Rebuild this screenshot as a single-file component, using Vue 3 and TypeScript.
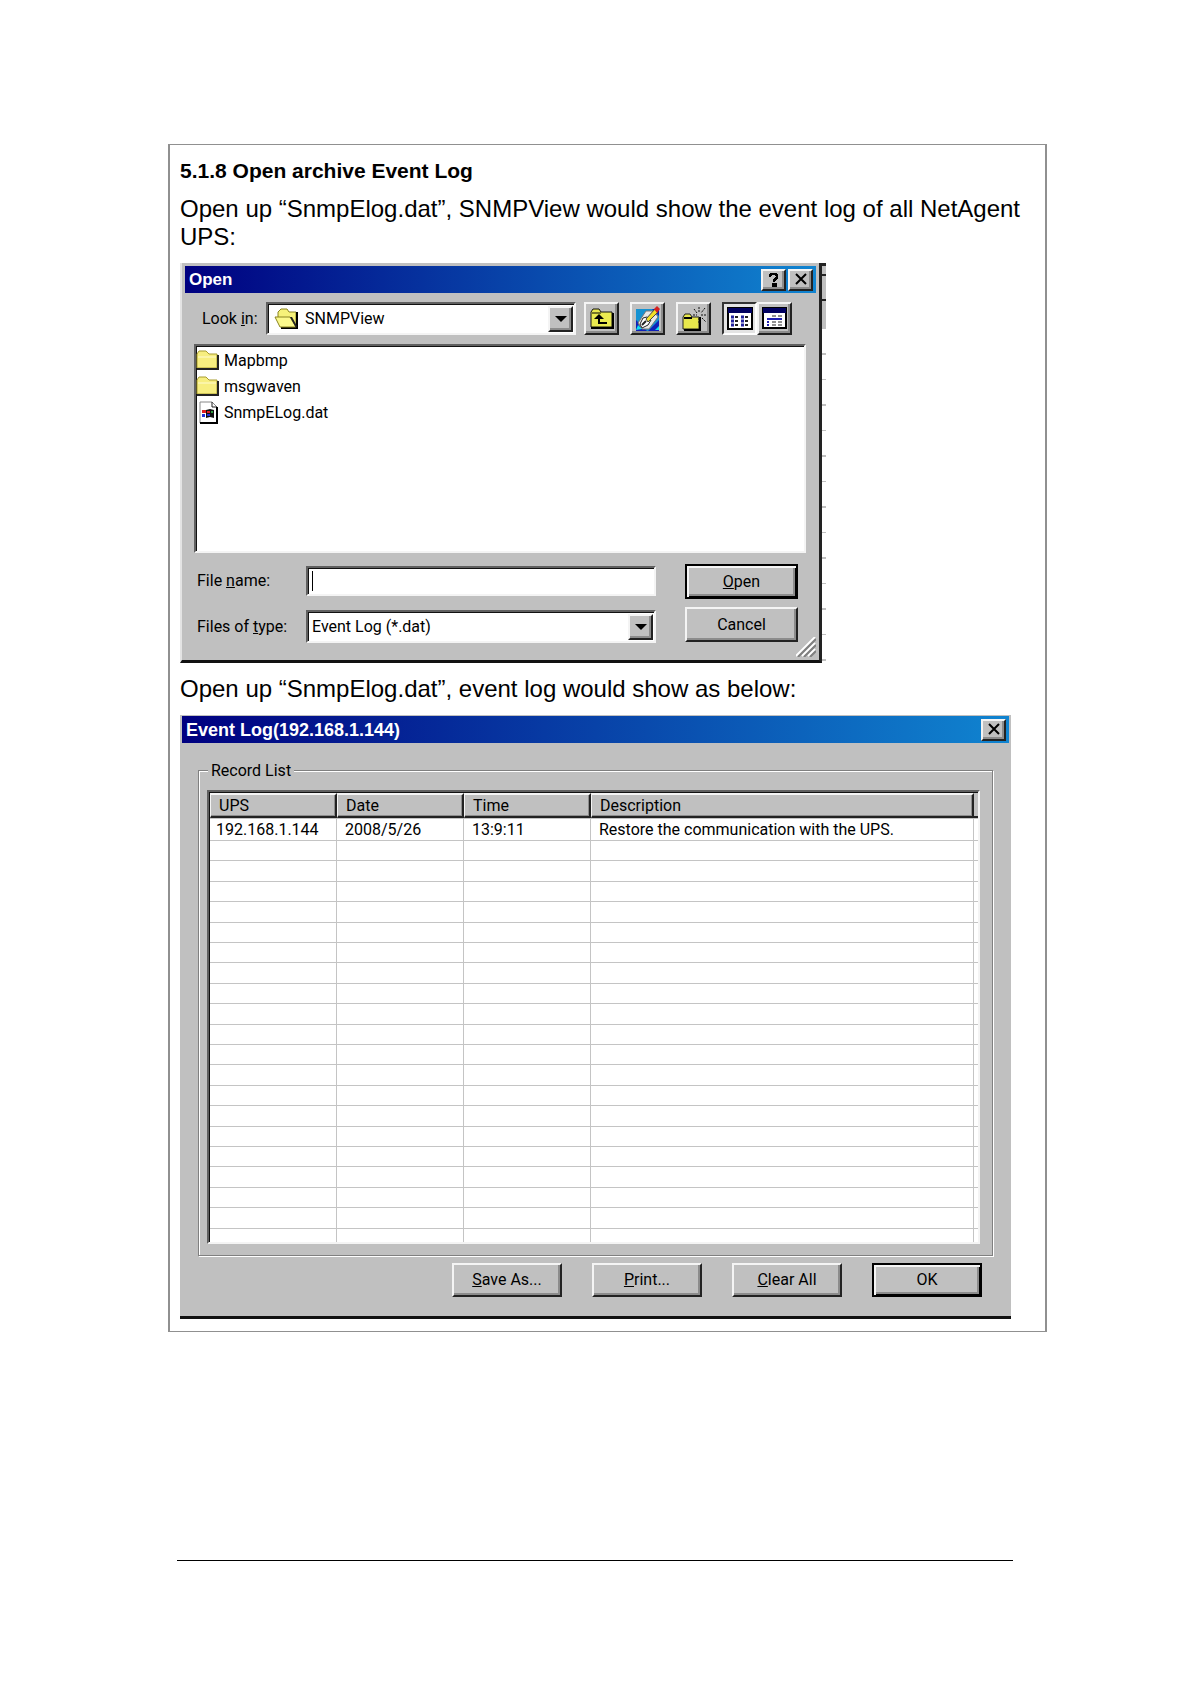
<script setup lang="ts">
import { ref } from 'vue'

interface FileEntry {
  name: string
  kind: 'folder' | 'data'
}

interface LogRecord {
  ups: string
  date: string
  time: string
  description: string
}

const files: FileEntry[] = [
  { name: 'Mapbmp', kind: 'folder' },
  { name: 'msgwaven', kind: 'folder' },
  { name: 'SnmpELog.dat', kind: 'data' },
]

const records: LogRecord[] = [
  {
    ups: '192.168.1.144',
    date: '2008/5/26',
    time: '13:9:11',
    description: 'Restore the communication with the UPS.',
  },
]

const emptyRows = 20
const fileName = ref('')
</script>

<template>
  <main class="page">
    <section class="frame">
      <h1 class="heading">5.1.8 Open archive Event Log</h1>
      <p class="para">
        Open up “SnmpElog.dat”, SNMPView would show the event log of all NetAgent UPS:
      </p>

      <form class="dialog open-dialog" @submit.prevent>
        <header class="titlebar">
          <h2 class="title">Open</h2>
          <button type="button" class="raised caption-btn" aria-label="Help">
            <svg width="14" height="15" viewBox="0 0 14 15">
              <path d="M3 5V3h1V2h5v1h1v3H9v1H8v1H7v2M6 12h3v2H6z" fill="none" stroke="#000" stroke-width="2" />
            </svg>
          </button>
          <button type="button" class="raised caption-btn" aria-label="Close">
            <svg width="14" height="13" viewBox="0 0 14 13">
              <path d="M2 1l10 10M12 1L2 11" stroke="#000" stroke-width="2" />
            </svg>
          </button>
        </header>

        <div class="toolbar">
          <label for="look-in">Look <u>i</u>n:</label>
          <div class="sunken combo look-combo">
            <svg class="combo-icon" width="26" height="22" viewBox="0 0 26 22">
              <path d="M4 10V4l3-3h6l2 3h7v15" fill="#f6f27a" stroke="#8a8420" />
              <path d="M23 4v16H7" fill="none" stroke="#000" stroke-width="2" />
              <path d="M1 9h15l6 10H6z" fill="#fbf98c" stroke="#8a8420" />
              <path d="M16 9h2l5 9-1 2z" fill="#222" />
            </svg>
            <select id="look-in" class="select">
              <option>SNMPView</option>
            </select>
            <span class="raised arrow"></span>
          </div>
          <div class="tools">
            <button type="button" class="raised tool" aria-label="Up one level">
              <svg width="26" height="24" viewBox="0 0 26 24">
                <path d="M2 20V5l2-3h6l2 3h11v15z" fill="#eaea50" stroke="#111" stroke-width="1" />
                <path d="M3 6h9" stroke="#000" />
                <path d="M2 21h22V6" fill="none" stroke="#000" stroke-width="2" />
                <path d="M10 10v6h8" fill="none" stroke="#000" stroke-width="2" />
                <path d="M5 12l5-5 5 5z" fill="#000" />
              </svg>
            </button>
            <button type="button" class="raised tool" aria-label="View desktop">
              <svg width="26" height="26" viewBox="0 0 26 26">
                <path d="M1 3h23v22H1z" fill="#1592d2" />
                <path d="M1 14l11 11H1zM24 14v11H13zM17 3h7v7z" fill="#1020b8" />
                <path d="M3 17l8-12h8l4 6-9 12H7z" fill="#e8e8e8" stroke="#777" />
                <path d="M1 24l2-5 4 4zM24 24h-4l4-4z" fill="#13e0ee" />
                <path d="M5 18l3-6 4-1 4 3-3 5-6 3z" fill="#fff" stroke="#222" />
                <path d="M11 13l9-10 3 3-10 10z" fill="#f1df28" stroke="#444" />
                <path d="M19 3l3-3 3 3-3 4z" fill="#d32020" />
                <path d="M7 19l4-4" stroke="#222" stroke-width="2" />
              </svg>
            </button>
            <button type="button" class="raised tool" aria-label="Create new folder">
              <svg width="26" height="26" viewBox="0 0 26 26">
                <path d="M2 23V11l2-3h5l2 3h7v12z" fill="#e8e84c" stroke="#222" />
                <path d="M3 24h16V11M3 12h8" fill="none" stroke="#000" stroke-width="2" />
                <path d="M18 1v5M13 3l3 4M24 2l-4 5M12 9h4M20 9h6M21 12l4 4M18 12v5" stroke="#111" stroke-dasharray="2 1" />
              </svg>
            </button>
            <div class="view-pair">
              <button type="button" class="tool pressed" aria-label="List">
                <svg width="26" height="24" viewBox="0 0 26 24">
                  <path d="M1 1h24v21H1z" fill="#fff" stroke="#000" stroke-width="2" />
                  <path d="M1 1h24v5H1z" fill="#000060" />
                  <path d="M4 10h3M4 14h3M4 18h3M14 10h3M14 14h3M14 18h3" stroke="#2020a0" stroke-width="3" />
                  <path d="M8 10h3M8 14h3M8 18h3M18 10h3M18 14h3M18 18h3" stroke="#222" stroke-width="2" />
                </svg>
              </button>
              <button type="button" class="raised tool" aria-label="Details">
                <svg width="26" height="24" viewBox="0 0 26 24">
                  <path d="M1 1h23v20H1z" fill="#fff" stroke="#000" stroke-width="2" />
                  <path d="M1 1h23v5H1z" fill="#000060" />
                  <path d="M10 9h4M16 9h4M10 15h4M16 15h4M10 18h4M16 18h4" stroke="#222" stroke-width="1" />
                  <path d="M5 12h15M5 15h2M5 18h2" stroke="#2020b0" stroke-width="2" />
                </svg>
              </button>
            </div>
          </div>
        </div>

        <ul class="sunken file-list">
          <li v-for="file in files" :key="file.name">
            <svg v-if="file.kind === 'folder'" width="24" height="22" viewBox="0 0 24 22">
              <path d="M1 18V4l2-3h7l3 3h8v14z" fill="#f7ee80" stroke="#a89c30" />
              <path d="M2 7h18" stroke="#fffbd0" />
              <path d="M1 19h21V5" fill="none" stroke="#222" stroke-width="2" />
            </svg>
            <svg v-else width="24" height="24" viewBox="0 0 24 24">
              <path d="M4 1h12l5 5v16H4z" fill="#fff" stroke="#888" />
              <path d="M16 1v5h5" fill="none" stroke="#222" />
              <path d="M21 6v16H4" fill="none" stroke="#000" stroke-width="2" />
              <path d="M10 9l4-1 4 1v8l-4-1-4 1z" fill="#111" />
              <path d="M6 9h4v3H6z" fill="#e02020" />
              <path d="M11 10h3v2h-3z" fill="#e02020" />
              <path d="M6 13h3v3H6zM11 13h3v2h-3z" fill="#2030d8" />
              <path d="M15 10h2v2h-2z" fill="#30a040" />
            </svg>
            <span>{{ file.name }}</span>
          </li>
        </ul>

        <div class="bottom">
          <div class="fields">
            <label for="file-name">File <u>n</u>ame:</label>
            <div class="sunken combo name-box">
              <span class="caret"></span>
              <input id="file-name" v-model="fileName" class="input" type="text" />
            </div>
            <label for="file-type">Files of <u>t</u>ype:</label>
            <div class="sunken combo">
              <select id="file-type" class="select">
                <option>Event Log (*.dat)</option>
              </select>
              <span class="raised arrow"></span>
            </div>
          </div>
          <div class="choices">
            <button type="submit" class="raised push default">
              <span><u>O</u>pen</span>
            </button>
            <button type="button" class="raised push">Cancel</button>
          </div>
        </div>
        <svg class="grip" width="20" height="20" viewBox="0 0 20 20">
          <path d="M0 19L19 0M6 19L19 6M12 19l7-7" stroke="#fff" stroke-width="2" />
          <path d="M2 20L20 2M8 20L20 8M14 20l6-6" stroke="#808080" stroke-width="2" />
        </svg>
      </form>

      <p class="para">Open up “SnmpElog.dat”, event log would show as below:</p>

      <section class="dialog log-dialog">
        <header class="titlebar">
          <h2 class="title">Event Log(192.168.1.144)</h2>
          <button type="button" class="raised caption-btn" aria-label="Close">
            <svg width="14" height="13" viewBox="0 0 14 13">
              <path d="M2 1l10 10M12 1L2 11" stroke="#000" stroke-width="2" />
            </svg>
          </button>
        </header>

        <fieldset class="group">
          <legend>Record List</legend>
          <div class="group-body">
            <div class="sunken grid-box">
              <table class="grid">
                <colgroup>
                  <col class="col-key" />
                  <col class="col-key" />
                  <col class="col-key" />
                  <col />
                  <col class="col-end" />
                </colgroup>
                <thead>
                  <tr>
                    <th scope="col">UPS</th>
                    <th scope="col">Date</th>
                    <th scope="col">Time</th>
                    <th scope="col">Description</th>
                    <td class="end"></td>
                  </tr>
                </thead>
                <tbody>
                  <tr v-for="record in records" :key="record.ups + record.time">
                    <td>{{ record.ups }}</td>
                    <td>{{ record.date }}</td>
                    <td>{{ record.time }}</td>
                    <td>{{ record.description }}</td>
                    <td></td>
                  </tr>
                  <tr v-for="row in emptyRows" :key="row">
                    <td v-for="cell in 5" :key="cell"></td>
                  </tr>
                </tbody>
              </table>
            </div>
          </div>
        </fieldset>

        <footer class="actions">
          <button type="button" class="raised push"><span><u>S</u>ave As...</span></button>
          <button type="button" class="raised push"><span><u>P</u>rint...</span></button>
          <button type="button" class="raised push"><span><u>C</u>lear All</span></button>
          <button type="button" class="raised push default">OK</button>
        </footer>
      </section>
    </section>
    <hr class="rule" />
  </main>
</template>

<style>
body {
  margin: 0;
  background: #fff;
}
</style>

<style scoped>
* {
  box-sizing: border-box;
}

.page {
  padding: 144px 143px 124px 168px;
  font-family: 'Liberation Sans', Arial, sans-serif;
  color: #000;
}

.frame {
  display: flex;
  flex-direction: column;
  gap: 12px;
  padding: 12px 24px 12px 10px;
  border: 1px solid #909090;
  border-width: 1px 2px;
}

.heading {
  margin: 0;
  font-size: 21px;
  line-height: 28px;
  font-weight: 700;
}

.para {
  margin: 0;
  font-size: 24px;
  line-height: 28px;
}

.heading + .para {
  margin-top: -2px;
}

.dialog {
  background: #c0c0c0;
  font-family: Roboto, 'Liberation Sans', sans-serif;
  font-size: 16px;
  line-height: 20px;
}

.open-dialog {
  position: relative;
  width: 642px;
  max-width: 100%;
  padding: 3px 3px 17px;
  border: solid #e4e4e4;
  border-width: 0 3px 3px 2px;
  border-right-color: #222;
  border-bottom-color: #111;
}

/* Strip of the window behind, visible past the dialog's right edge. */
.open-dialog::after {
  content: '';
  position: absolute;
  top: 0;
  right: -7px;
  width: 4px;
  height: 399px;
  background:
    linear-gradient(#222, #222) 0 0 / 4px 3px no-repeat,
    linear-gradient(#222, #222) 0 11px / 4px 2px no-repeat,
    linear-gradient(#222, #222) 0 36px / 4px 2px no-repeat,
    linear-gradient(#c0c0c0, #c0c0c0) 0 0 / 4px 66px no-repeat,
    repeating-linear-gradient(#fff 0 24px, #c0c0c0 24px 26px, #fff 26px 50px, #c0c0c0 50px 51px) 0 66px / 4px 333px no-repeat;
}

.titlebar {
  display: flex;
  align-items: center;
  gap: 2px;
  height: 27px;
  padding: 0 3px 0 4px;
  background: linear-gradient(90deg, #000080, #1084d0);
}

.title {
  flex: 1;
  margin: 0;
  color: #fff;
  font-family: 'Liberation Sans', Arial, sans-serif;
  font-size: 17px;
  line-height: 20px;
  font-weight: 700;
}

button {
  display: flex;
  align-items: center;
  justify-content: center;
  padding: 0;
  color: #000;
  font: inherit;
}

.raised {
  border: 2px solid #f4f4f4;
  border-right-color: #222;
  border-bottom-color: #222;
  background: #c0c0c0;
  box-shadow: inset -2px -2px 0 #8c8c8c;
}

.sunken {
  border: 2px solid;
  border-color: #606060 #f4f4f4 #f4f4f4 #606060;
  background: #fff;
  box-shadow: inset 1px 1px 0 #111;
}

.caption-btn {
  width: 25px;
  height: 22px;
}

.toolbar {
  display: flex;
  align-items: center;
  height: 33px;
  margin: 9px 24px 9px 17px;
}

.toolbar label {
  width: 64px;
}

.combo {
  display: flex;
  align-items: center;
  min-width: 0;
  height: 33px;
  padding: 2px 1px 2px 2px;
}

.look-combo {
  flex: 1;
}

.combo-icon {
  flex: none;
  margin-left: 4px;
}

.select,
.input {
  flex: 1;
  min-width: 0;
  height: 24px;
  padding: 0 0 0 2px;
  border: 0;
  outline: 0;
  background: transparent;
  color: #000;
  font: inherit;
  appearance: none;
}

.look-combo .select {
  padding-left: 5px;
}

.arrow {
  display: flex;
  align-items: center;
  justify-content: center;
  width: 25px;
  height: 26px;
}

.arrow::before {
  content: '';
  border: 6px solid transparent;
  border-top-color: #000;
  border-bottom-width: 0;
}

.tools {
  display: flex;
  gap: 11px;
  margin-left: 8px;
}

.view-pair {
  display: flex;
}

.tool {
  width: 35px;
  height: 33px;
}

.pressed {
  border: 2px solid;
  border-color: #333 #fff #fff #333;
  background: #e4e4e4;
}

.file-list {
  height: 209px;
  margin: 0 10px 0 9px;
  padding: 2px 0;
  list-style: none;
}

.file-list li {
  display: flex;
  align-items: center;
  gap: 4px;
  height: 26px;
}

.bottom {
  display: flex;
  justify-content: space-between;
  margin: 11px 18px 0 12px;
}

.fields {
  display: grid;
  grid-template-columns: 109px 350px;
  grid-template-rows: 30px 33px;
  align-items: center;
  row-gap: 14px;
  padding-top: 2px;
}

.choices {
  display: flex;
  flex-direction: column;
  gap: 8px;
}

.name-box {
  height: 30px;
}

.caret {
  width: 1px;
  height: 20px;
  margin-left: 2px;
  background: #000;
}

.push {
  width: 113px;
  height: 35px;
}

.default {
  border-color: #000;
  box-shadow:
    inset 2px 2px 0 #f4f4f4,
    inset -1px -1px 0 #000,
    inset -3px -3px 0 #8c8c8c;
}

.grip {
  position: absolute;
  right: 3px;
  bottom: 3px;
}

.log-dialog {
  width: 831px;
  max-width: 100%;
  padding: 1px 2px 19px;
  border-bottom: 3px solid #111;
}

.log-dialog .title {
  font-size: 18px;
}

.group {
  margin: 18px 16px 7px;
  padding: 0;
  border: 0;
}

.group legend {
  position: relative;
  z-index: 1;
  margin-left: 10px;
  padding: 0 3px;
  background: #c0c0c0;
}

.group-body {
  margin-top: -11px;
  padding: 19px 12px 11px 8px;
  border: 1px solid #808080;
  box-shadow:
    1px 1px 0 #fff,
    inset 1px 1px 0 #fff;
}

.grid-box {
  height: 454px;
  overflow: hidden;
  padding: 1px 0 0 1px;
}

.grid {
  width: 100%;
  table-layout: fixed;
  border-collapse: separate;
  border-spacing: 0;
}

.col-key {
  width: 127px;
}

.col-end {
  width: 4px;
}

.grid th {
  height: 25px;
  padding: 0 8px;
  border: solid #f4f4f4;
  border-width: 2px 2px 2px 1px;
  border-right-color: #222;
  border-bottom-color: #222;
  background: #c0c0c0;
  box-shadow: inset -1px -1px 0 #8c8c8c;
  font-weight: 400;
  line-height: 18px;
  text-align: left;
}

.grid .end {
  height: 25px;
  padding: 0;
  border-right: 0;
  border-bottom: 2px solid #222;
  background: #c0c0c0;
}

.grid tbody td {
  height: 20px;
  padding: 0 8px;
  border: solid #c4c4c4;
  border-width: 0 1px 1px 0;
  line-height: 18px;
  white-space: nowrap;
}

.grid tbody td:first-child {
  padding-left: 6px;
}

.grid tbody td:last-child {
  padding: 0;
  border-right: 0;
}

.grid tbody tr:first-child td {
  height: 23px;
  border-top-width: 1px;
}

.grid tbody tr:nth-child(5n + 3) td,
.grid tbody tr:nth-child(5n) td {
  height: 21px;
}

.actions {
  display: flex;
  justify-content: flex-end;
  gap: 30px;
  margin-right: 27px;
}

.actions .push {
  width: 110px;
  height: 34px;
}

.rule {
  height: 1px;
  margin: 228px 34px 0 9px;
  border: 0;
  background: #000;
}
</style>
